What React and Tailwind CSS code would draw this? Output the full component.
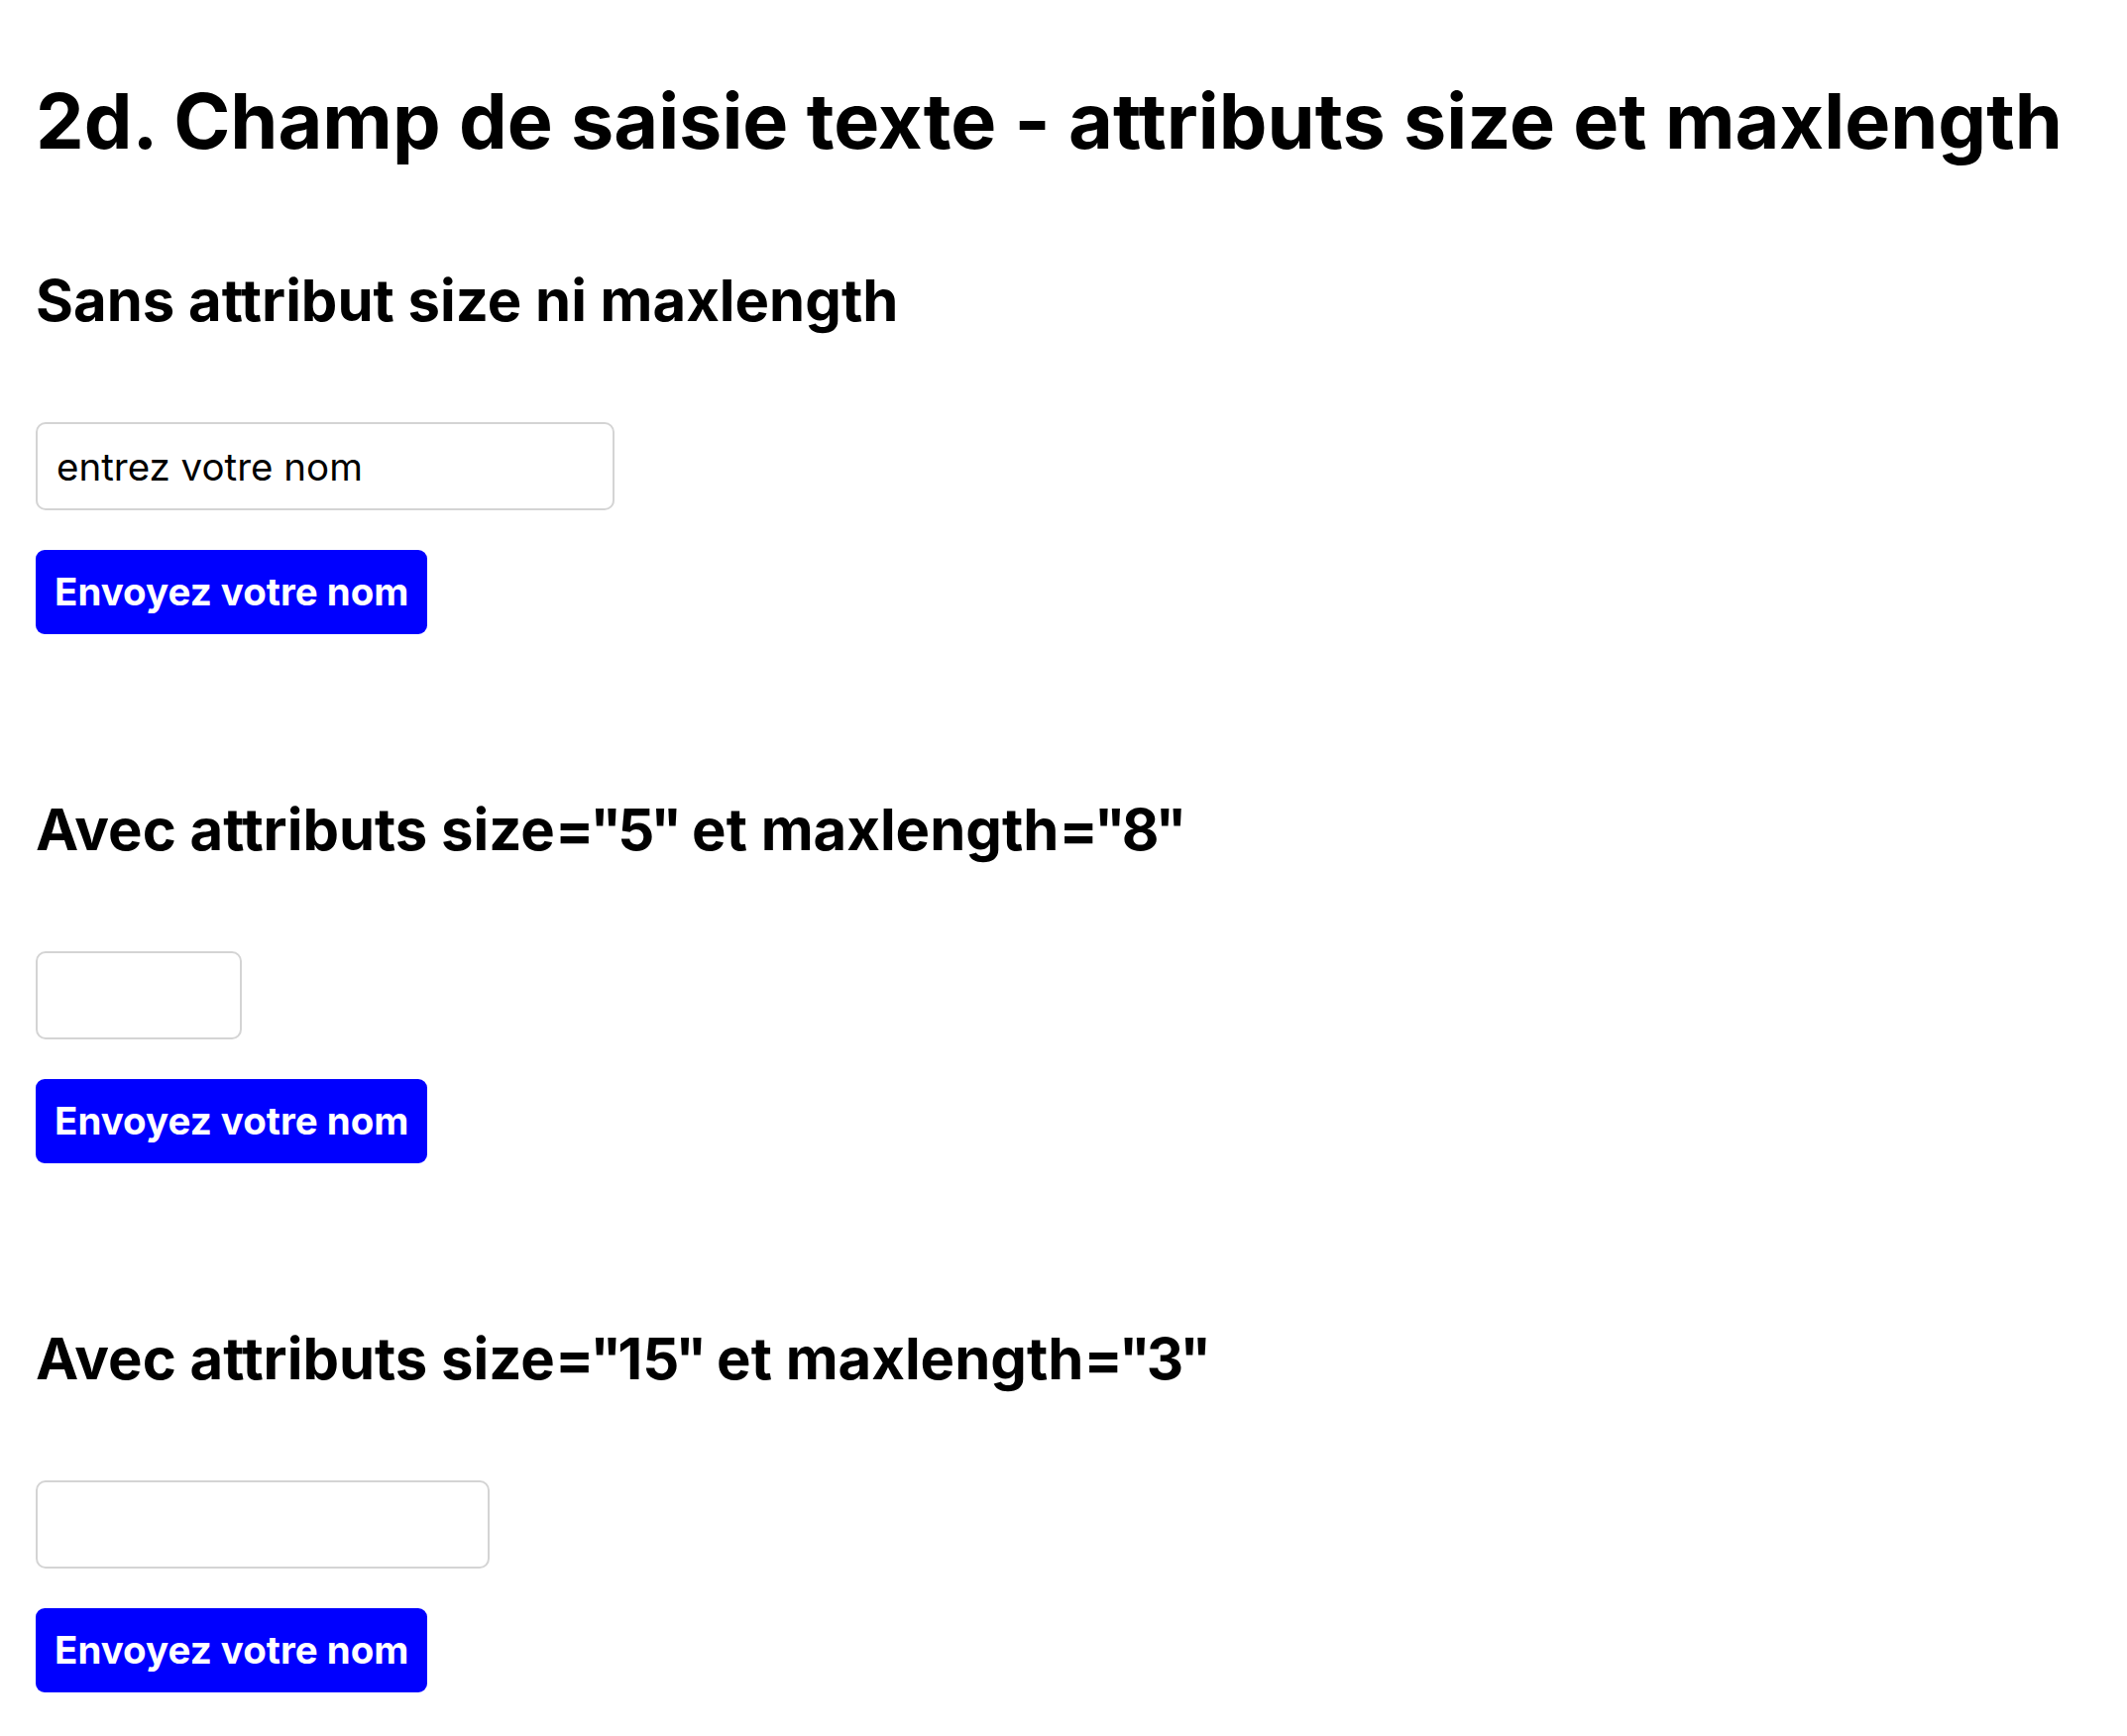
const sections = [
  { title: "Sans attribut size ni maxlength", width: "w-[584px]", value: "entrez votre nom" },
  { title: 'Avec attributs size="5" et maxlength="8"', width: "w-[208px]", value: "" },
  { title: 'Avec attributs size="15" et maxlength="3"', width: "w-[458px]", value: "" },
]

// quotes sit tighter in the reference than in this Inter build
function Tight({ text }) {
  const parts = text.split('"')
  return parts.map((p, i) => (
    <span key={i}>
      {p}
      {i < parts.length - 1 && <span className="mx-[-4px]">"</span>}
    </span>
  ))
}

function Section({ title, width, value }) {
  return (
    <section className="flex flex-col items-start">
      <h2 className="text-[58px] leading-none font-bold text-black whitespace-nowrap">
        <Tight text={title} />
      </h2>
      <input
        type="text"
        defaultValue={value}
        className={`${width} h-[89px] mt-[94px] px-[19px] rounded-[10px] border-[2.5px] border-[#d4d4d4] bg-white text-[38.5px] text-black outline-none`}
      />
      <button className="mt-[40px] h-[85px] px-[19px] rounded-[9px] bg-[#0000ff] text-white text-[38.5px] font-bold whitespace-nowrap">
        Envoyez votre nom
      </button>
    </section>
  )
}

export default function App() {
  return (
    <div className="min-h-screen bg-white pl-[36px] pt-[84px] font-['Inter',sans-serif]">
      <h1 className="text-[77.3px] leading-none font-bold text-black mb-[113px] whitespace-nowrap">
        2d. Champ de saisie texte - attributs size et maxlength
      </h1>
      <div className="flex flex-col gap-[168px]">
        {sections.map((s) => (
          <Section key={s.title} {...s} />
        ))}
      </div>
    </div>
  )
}
